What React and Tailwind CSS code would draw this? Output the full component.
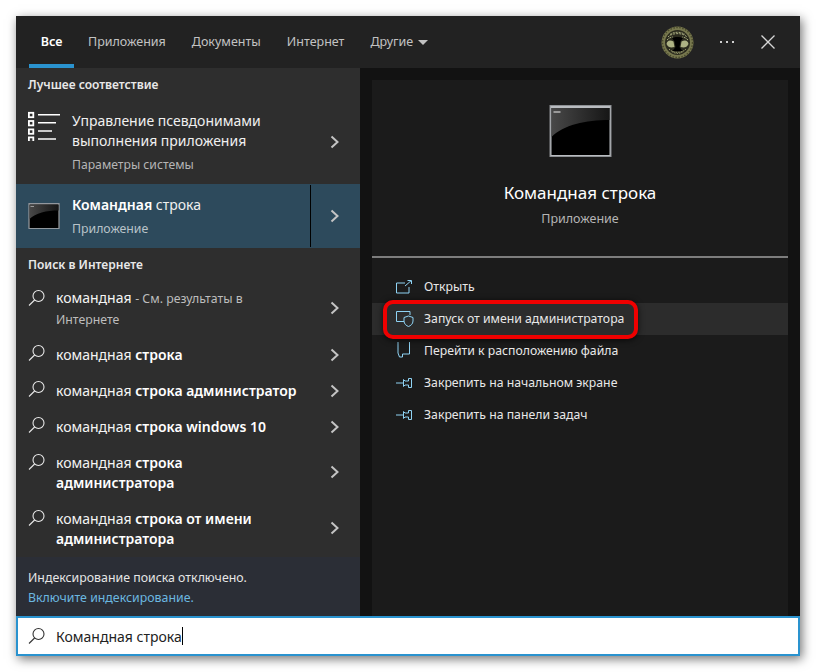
import React from 'react';

const font = { fontFamily: '"Noto Sans", "Open Sans", sans-serif' };

const Chevron = ({ className = '' }) => (
  <svg width="10" height="14" viewBox="0 0 10 14" fill="none" className={`shrink-0 ${className}`}>
    <path d="M1.5 1.5 7.5 7 1.5 12.5" stroke="#c4c4c4" strokeWidth="2" />
  </svg>
);

const SearchIcon = ({ color = '#e8e8e8' }) => (
  <svg width="18" height="18" viewBox="0 0 18 18" fill="none" className="shrink-0">
    <circle cx="10.5" cy="7" r="5.5" stroke={color} strokeWidth="1.1" />
    <path d="M6.6 11 1 16.5" stroke={color} strokeWidth="1.1" />
  </svg>
);

const CmdIcon = ({ w, h, id }) => (
  <svg width={w} height={h} viewBox="0 0 62 52" className="shrink-0">
    <defs>
      <linearGradient id={id} x1="0" y1="0" x2="1" y2="0">
        <stop offset="0" stopColor="#484848" />
        <stop offset="1" stopColor="#161616" />
      </linearGradient>
    </defs>
    <rect x="0.5" y="0.5" width="61" height="51" fill="#b9bcc0" stroke="#8d9094" />
    <rect x="2" y="3" width="58" height="47" fill="#000" />
    <path d="M2 3H60V15C36 15 14 20 2 32Z" fill={`url(#${id})`} />
    <rect x="4" y="6" width="7" height="2" fill="#999" />
  </svg>
);

const AliasIcon = () => (
  <svg width="33" height="30" viewBox="0 0 33 30" fill="none" className="shrink-0">
    {[1.8, 10, 18.4, 26.4].map((y) => (
      <rect key={y} x="0.9" y={y} width="4.4" height="4.4" stroke="#fff" strokeWidth="1.8" />
    ))}
    <path d="M10 3.8H32M10 11.8H28M10 20H24M10 28H28" stroke="#fff" strokeWidth="1.5" />
  </svg>
);

const blue = '#8fd3f4';

const OpenIcon = () => (
  <svg width="16" height="14" viewBox="0 0 16 14" fill="none">
    <path d="M9 3H.5V13H13V7" stroke={blue} />
    <path d="M9 6 15 .8M11.5.5H15.5V4" stroke={blue} />
  </svg>
);

const ShieldIcon = () => (
  <svg width="18" height="16" viewBox="0 0 18 16" fill="none">
    <path d="M8 10.5H.5V.5H14V4" stroke={blue} />
    <path d="M12.5 5 17 6.5V10C17 13 14.5 14.8 12.5 15.5 10.5 14.8 8 13 8 10V6.5Z" stroke={blue} />
  </svg>
);

const FolderIcon = () => (
  <svg width="15" height="18" viewBox="0 0 15 18" fill="none">
    <path d="M2 0V11L3.5 15H6.5V12H13.5V0" stroke={blue} />
  </svg>
);

const PinIcon = () => (
  <svg width="16" height="12" viewBox="0 0 16 12" fill="none">
    <path d="M0 6H7" stroke={blue} />
    <path d="M7.5 2.5 9 4H12.5V1.5H15.5V10.5H12.5V8H9L7.5 9.5Z" stroke={blue} />
  </svg>
);

const Avatar = () => (
  <svg width="33" height="33" viewBox="0 0 33 33">
    <circle cx="16.5" cy="16.5" r="16" fill="#77784e" />
    <circle cx="16.5" cy="16.5" r="15" fill="none" stroke="#4a4a2c" strokeWidth="1.5" strokeDasharray="1.5 1.5" />
    <circle cx="16.5" cy="16.5" r="12.5" fill="#2b2b1e" />
    <path d="M5.5 18C6 14.5 9 13.5 12.5 15.5L13.5 21C10 22 7 21.5 5.5 18Z" fill="#aeb384" />
    <path d="M27.5 18C27 14.5 24 13.5 20.5 15.5L19.5 21C23 22 26 21.5 27.5 18Z" fill="#aeb384" />
    <path d="M7 11C11 6.5 22 6.5 26 11M9 8.5C13 5.5 20 5.5 24 8.5M6 14C8 12 10 11 12 11M27 14C25 12 23 11 21 11" stroke="#a9ad80" strokeWidth="1" strokeDasharray="2 1" fill="none" />
    <path d="M8 23C12 27.5 21 27.5 25 23M11 25.5C14 28 19 28 22 25.5" stroke="#9a9d6e" strokeWidth="1" strokeDasharray="1.5 1" fill="none" />
    <path d="M11 12C14 10.5 19 10.5 22 12L19.5 15.5 18.5 21 21.5 25H11.5L14.5 21 13.5 15.5Z" fill="#000" />
  </svg>
);

const webRows = [
  { a: 'командная', b: '', note: true, h: 'h-14' },
  { a: 'командная', b: ' строка', h: 'h-9' },
  { a: 'командная', b: ' строка администратор', h: 'h-9' },
  { a: 'командная', b: ' строка windows 10', h: 'h-9' },
  { a: 'командная', b: ' строка', b2: 'администратора', h: 'h-14' },
  { a: 'командная', b: ' строка от имени', b2: 'администратора', h: 'h-14' },
];

const actions = [
  { icon: <OpenIcon />, label: 'Открыть' },
  { icon: <ShieldIcon />, label: 'Запуск от имени администратора', active: true },
  { icon: <FolderIcon />, label: 'Перейти к расположению файла' },
  { icon: <PinIcon />, label: 'Закрепить на начальном экране' },
  { icon: <PinIcon />, label: 'Закрепить на панели задач' },
];

export default function App() {
  return (
    <div className="w-[816px] h-[672px] bg-white pt-4 pl-4" style={font}>
      <div className="w-[784px] h-[640px] flex flex-col bg-[#121212] shadow-[2px_3px_10px_rgba(0,0,0,0.55)]">
        {/* tabs */}
        <div className="h-[52px] shrink-0 bg-[#222222] flex items-center text-[12.5px] text-[#c2c2c2]">
          <div className="relative h-full w-[45px] ml-[13px] flex items-center justify-center font-semibold text-white">
            Все
            <div className="absolute bottom-0 left-0 right-0 h-1 bg-[#2a93cf]" />
          </div>
          <span className="ml-[14px]">Приложения</span>
          <span className="ml-[26px]">Документы</span>
          <span className="ml-[26px]">Интернет</span>
          <span className="ml-[26px] flex items-center gap-[5px]">
            Другие
            <span className="w-0 h-0 border-x-[5.5px] border-x-transparent border-t-[5px] border-t-[#c2c2c2]" />
          </span>
          <div className="ml-auto flex items-center">
            <Avatar />
            <div className="ml-[26px] flex gap-[4px]">
              <span className="w-[2px] h-[2px] bg-[#cfcfcf]" />
              <span className="w-[2px] h-[2px] bg-[#cfcfcf]" />
              <span className="w-[2px] h-[2px] bg-[#cfcfcf]" />
            </div>
            <svg width="14" height="14" viewBox="0 0 14 14" className="ml-[27px] mr-[25px]">
              <path d="M.5.5 13.5 13.5M13.5.5.5 13.5" stroke="#d6d6d6" strokeWidth="1.3" />
            </svg>
          </div>
        </div>

        <div className="flex-1 flex min-h-0">
          {/* left column */}
          <div className="w-[344px] shrink-0 bg-[#2e2e2e] flex flex-col">
            <div className="h-8 shrink-0 pl-3 pt-[2px] flex items-center text-[12px] font-semibold text-[#e8e8e8]">Лучшее соответствие</div>
            <div className="h-[84px] shrink-0 pl-3 pr-5 flex items-start">
              <div className="w-11 pt-[11px]"><AliasIcon /></div>
              <div className="flex-1 pt-[11px] text-[14px] leading-[20px] text-[#f0f0f0]">
                <div>Управление псевдонимами</div>
                <div>выполнения приложения</div>
                <div className="mt-[4px] text-[12.2px] text-[#b5b5b5]">Параметры системы</div>
              </div>
              <div className="self-center mt-[-1px]"><Chevron /></div>
            </div>
            <div className="h-16 shrink-0 pl-3 bg-[#2d4a5c] flex items-center">
              <CmdIcon w={32} h={26} id="cmd-small" />
              <div className="ml-3 flex-1 pt-[2px] text-[14px] text-[#f0f0f0]">
                <div className="leading-[20px]"><span className="font-semibold text-white">Командная</span> строка</div>
                <div className="mt-[4px] text-[12.3px] leading-[20px] text-[#b9c3c9]">Приложение</div>
              </div>
              <div className="w-[50px] self-stretch my-px border-l border-black flex items-center pl-[19px]"><Chevron /></div>
            </div>
            <div className="h-[33px] shrink-0 pl-3 flex items-center text-[12px] font-semibold text-[#e8e8e8]">Поиск в Интернете</div>
            {webRows.map((row, i) => (
              <div key={i} className={`${row.h} shrink-0 pl-3 pr-5 flex items-center`}>
                <div className={`w-7 self-start ${row.h === 'h-9' ? 'pt-[7px]' : 'pt-[8px]'}`}><SearchIcon /></div>
                <div className="flex-1 text-[14px] leading-[20px] text-[#f4f4f4]">
                  {row.note ? (
                    <>
                      <div>{row.a} <span className="text-[12.3px] text-[#bdbdbd]">- См. результаты в</span></div>
                      <div className="text-[12.3px] leading-[22px] text-[#bdbdbd]">Интернете</div>
                    </>
                  ) : (
                    <>
                      <div>{row.a}<span className="font-semibold text-white">{row.b}</span></div>
                      {row.b2 && <div className="font-semibold text-white">{row.b2}</div>}
                    </>
                  )}
                </div>
                <Chevron className={row.h === 'h-14' ? 'mt-[-2px]' : ''} />
              </div>
            ))}
            <div className="flex-1 bg-[#2b2e36] pl-3 pt-[11px] text-[12.35px] leading-[20px]">
              <div className="text-[#e6e6e6]">Индексирование поиска отключено.</div>
              <div className="text-[#6bb8e0]">Включите индексирование.</div>
            </div>
          </div>

          {/* right column */}
          <div className="flex-1 flex flex-col pl-3 pr-3 pt-3">
            <div className="relative flex-1 bg-[#1b1b1b] flex flex-col">
              <div className="h-[178px] shrink-0 border-b-2 border-[#7d7d7d] flex flex-col items-center pt-[25px]">
                <CmdIcon w={63} h={52} id="cmd-large" />
                <div className="mt-[24px] text-[17px] leading-[24px] text-white">Командная строка</div>
                <div className="mt-[5px] text-[12.5px] leading-[18px] text-[#b5b5b5]">Приложение</div>
              </div>
              <div className="pt-[13px]">
                {actions.map((a) => (
                  <div key={a.label} className={`h-8 flex items-center text-[12.25px] text-[#e8e8e8] ${a.active ? 'bg-[#2c2c2c]' : ''}`}>
                    <div className="w-[52px] pl-6 flex items-center">{a.icon}</div>
                    <span>{a.label}</span>
                  </div>
                ))}
              </div>
              {/* red callout */}
              <div className="absolute left-[11px] top-[220px] w-[255px] h-[39px] rounded-[10px] border-4 border-[#f00000] shadow-[0_1px_6px_rgba(0,0,0,0.7)]" />
            </div>
          </div>
        </div>

        {/* search box */}
        <div className="h-10 shrink-0 bg-white border-2 border-[#2a93cf] flex items-center pl-[10px] text-[14px] text-[#222]">
          <SearchIcon color="#333" />
          <span className="ml-[10px]">Командная строка</span>
          <span className="w-px h-[18px] bg-black" />
        </div>
      </div>
    </div>
  );
}
